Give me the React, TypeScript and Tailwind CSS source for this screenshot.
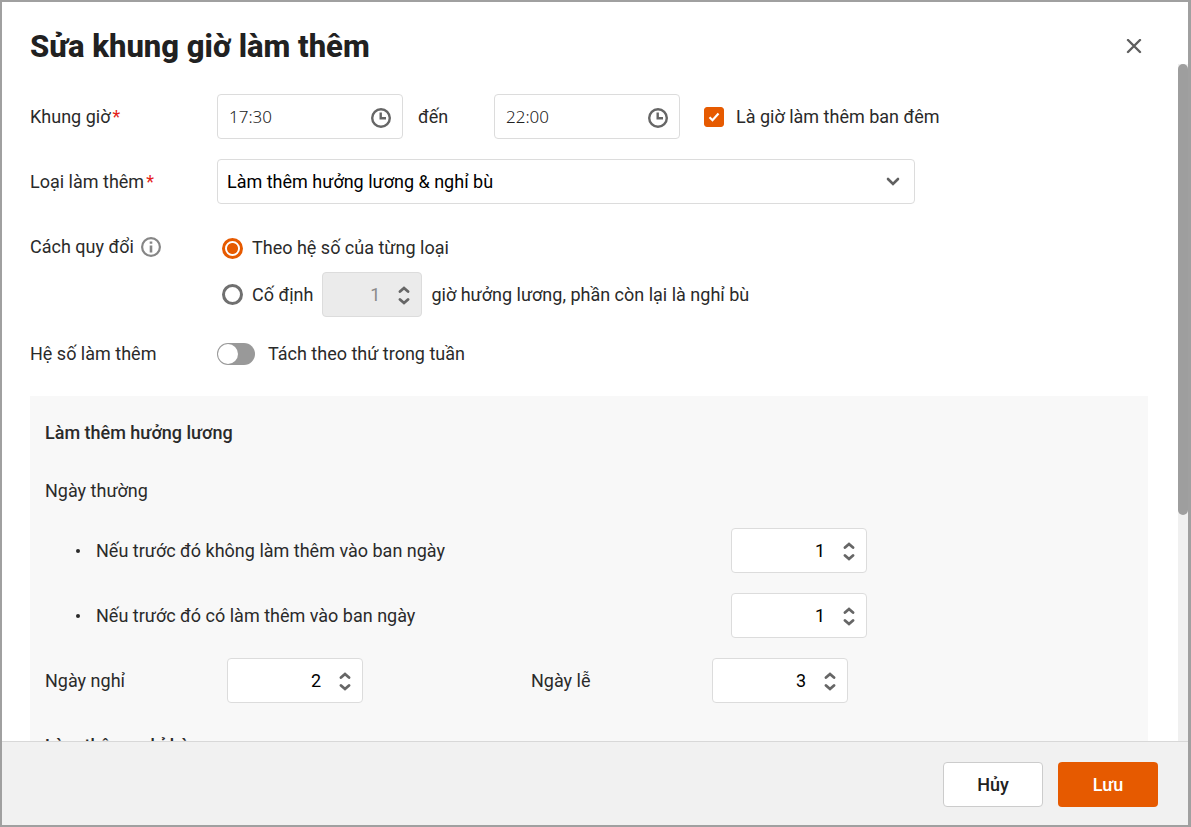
import React, { useState } from 'react';

interface NumberFieldProps {
  label: string;
  initial: number;
  disabled?: boolean;
  className?: string;
}

const Chevron: React.FC<{ up?: boolean }> = ({ up }) => (
  <svg width="12" height="7" viewBox="0 0 12 7" fill="none" stroke="#666" strokeWidth="2.8" strokeLinecap="round">
    <path d={up ? 'M2 5.5L6 2L10 5.5' : 'M2 1.5L6 5L10 1.5'} />
  </svg>
);

const NumberField: React.FC<NumberFieldProps> = ({ label, initial, disabled, className = 'w-[136px]' }) => {
  const [value, setValue] = useState(initial);

  return (
    <div
      className={`flex h-[45px] shrink-0 items-center rounded border border-[#dcdcdc] pr-[11px] ${
        disabled ? 'bg-[#ebebeb] text-[#8a8a8a]' : 'bg-white text-black'
      } ${className}`}
    >
      <input
        type="text"
        inputMode="numeric"
        aria-label={label}
        disabled={disabled}
        value={value}
        onChange={(e) => setValue(Number(e.target.value) || 0)}
        className="h-full w-full min-w-0 bg-transparent text-right outline-none"
      />
      <div className="ml-[18px] mt-[2px] flex flex-col gap-[5px]">
        <button type="button" aria-label="Tăng" disabled={disabled} onClick={() => setValue(value + 1)}>
          <Chevron up />
        </button>
        <button type="button" aria-label="Giảm" disabled={disabled} onClick={() => setValue(value - 1)}>
          <Chevron />
        </button>
      </div>
    </div>
  );
};

const TimeField: React.FC<{ id: string; label: string; initial: string }> = ({ id, label, initial }) => (
  <div className="flex h-[45px] w-[186px] shrink-0 items-center rounded border border-[#dcdcdc] px-[11px]">
    <input
      id={id}
      type="text"
      aria-label={label}
      defaultValue={initial}
      className="h-full w-full min-w-0 bg-transparent font-['Noto_Sans',sans-serif] text-[17px] font-light text-[#222] outline-none"
    />
    <svg className="mt-[2px] shrink-0" width="20" height="20" viewBox="0 0 20 20" fill="none" stroke="#666" strokeWidth="2.4">
      <circle cx="10" cy="10" r="8.8" />
      <path d="M9.7 4.5V10.2H15" />
    </svg>
  </div>
);

const Required = () => <span className="ml-[2px] text-[#e5231b]">*</span>;

const radioClass =
  'size-[21px] shrink-0 appearance-none rounded-full border-[3px] border-[#707070] bg-white checked:border-[#e65a00] checked:bg-[radial-gradient(circle,#e65a00_5px,#fff_6px)]';

const App = () => {
  const [mode, setMode] = useState('rate');
  const [split, setSplit] = useState(false);

  return (
    <div className="flex h-screen flex-col overflow-hidden border-2 border-r-3 border-[#a0a0a0] bg-white font-[Roboto,sans-serif] text-[18px] leading-6 text-[#2a2a2a]">
      <header className="flex h-[62px] shrink-0 items-center justify-between pl-7 pr-[46px] pt-7">
        <h1 className="text-[31px] font-extrabold leading-9 text-[#212121]">Sửa khung giờ làm thêm</h1>
        <button type="button" aria-label="Đóng">
          <svg width="16" height="16" viewBox="0 0 16 16" stroke="#5f5f5f" strokeWidth="2.4" strokeLinecap="round">
            <path d="M2 1L14 13M14 1L2 13" />
          </svg>
        </button>
      </header>

      <div className="flex min-h-0 flex-1">
        <form className="min-w-0 flex-1 overflow-y-auto pl-7 pr-[30px] pt-[30px] [scrollbar-width:none]">
          <div className="mb-5 flex h-[45px] items-center">
            <label htmlFor="from" className="w-[187px] shrink-0">
              Khung giờ
              <Required />
            </label>
            <TimeField id="from" label="Từ" initial="17:30" />
            <label htmlFor="to" className="w-[91px] shrink-0 pl-[15px]">
              đến
            </label>
            <TimeField id="to" label="Đến" initial="22:00" />
            <label className="ml-6 flex items-center gap-3">
              <span className="relative flex">
                <input
                  type="checkbox"
                  defaultChecked
                  className="peer size-5 appearance-none rounded-[3px] border border-[#999] checked:border-[#e65a00] checked:bg-[#e65a00]"
                />
                <svg
                  className="pointer-events-none absolute left-1 top-1 hidden peer-checked:block"
                  width="12"
                  height="12"
                  viewBox="0 0 12 12"
                  fill="none"
                  stroke="#fff"
                  strokeWidth="2.2"
                >
                  <path d="M1.5 6.2L4.5 9.2L10.5 2.5" />
                </svg>
              </span>
              Là giờ làm thêm ban đêm
            </label>
          </div>

          <div className="mb-5 flex h-[45px] items-center">
            <label htmlFor="kind" className="w-[187px] shrink-0">
              Loại làm thêm
              <Required />
            </label>
            <div className="relative w-[698px]">
              <select
                id="kind"
                className="h-[45px] w-full appearance-none rounded border border-[#dcdcdc] bg-white px-[9px] text-black outline-none"
              >
                <option>Làm thêm hưởng lương &amp; nghỉ bù</option>
              </select>
              <svg
                className="pointer-events-none absolute right-[15px] top-[18px]"
                width="14"
                height="10"
                viewBox="0 0 14 10"
                fill="none"
                stroke="#606060"
                strokeWidth="2.6"
                strokeLinecap="round"
              >
                <path d="M2 2L7 7L12 2" />
              </svg>
            </div>
          </div>

          <div className="mb-[14px] flex items-start">
            <div className="flex h-[45px] w-[187px] shrink-0 items-center gap-[7px]">
              Cách quy đổi
              <svg width="20" height="20" viewBox="0 0 20 20" fill="none" stroke="#868686" strokeWidth="2.2">
                <circle cx="10" cy="10" r="8.9" />
                <path d="M10 8.5V15.5M10 4.5V6.7" strokeWidth="2.6" />
              </svg>
            </div>
            <div className="pl-[5px]">
              <label className="flex h-12 items-center gap-[9px]">
                <input
                  type="radio"
                  name="mode"
                  checked={mode === 'rate'}
                  onChange={() => setMode('rate')}
                  className={radioClass}
                />
                Theo hệ số của từng loại
              </label>
              <div className="flex items-center gap-[9px]">
                <label className="flex items-center gap-[9px]">
                  <input
                    type="radio"
                    name="mode"
                    checked={mode === 'fixed'}
                    onChange={() => setMode('fixed')}
                    className={radioClass}
                  />
                  Cố định
                </label>
                <NumberField label="Số giờ hưởng lương" initial={1} disabled={mode !== 'fixed'} className="w-[100px]" />
                <span>giờ hưởng lương, phần còn lại là nghỉ bù</span>
              </div>
            </div>
          </div>

          <div className="mb-5 flex h-[45px] items-center">
            <span className="w-[187px] shrink-0">Hệ số làm thêm</span>
            <label className="flex items-center gap-[13px]">
              <input
                type="checkbox"
                role="switch"
                checked={split}
                onChange={(e) => setSplit(e.target.checked)}
                className="flex h-[22px] w-[38px] appearance-none items-center rounded-full bg-[#999] px-px before:size-5 before:rounded-full before:bg-white checked:justify-end checked:bg-[#e65a00]"
              />
              Tách theo thứ trong tuần
            </label>
          </div>

          <section className="bg-[#f8f8f8] px-[15px] pt-[14px]">
            <h2 className="mb-[13px] flex h-[45px] items-center font-medium">Làm thêm hưởng lương</h2>
            <p className="mb-[15px] flex h-[45px] items-center">Ngày thường</p>
            <ul>
              {['Nếu trước đó không làm thêm vào ban ngày', 'Nếu trước đó có làm thêm vào ban ngày'].map((text) => (
                <li key={text} className="mb-5 flex items-center pl-[31px]">
                  <span className="mr-4 size-1 rounded-full bg-[#2a2a2a]" />
                  <span className="w-[635px]">{text}</span>
                  <NumberField label={text} initial={1} />
                </li>
              ))}
            </ul>
            <div className="mb-5 flex items-center">
              <div className="flex w-[486px] items-center">
                <span className="w-[182px]">Ngày nghỉ</span>
                <NumberField label="Ngày nghỉ" initial={2} />
              </div>
              <div className="flex items-center">
                <span className="w-[181px]">Ngày lễ</span>
                <NumberField label="Ngày lễ" initial={3} />
              </div>
            </div>
            <h2 className="flex h-[45px] items-center font-medium">Làm thêm nghỉ bù</h2>
          </section>
        </form>

        <div className="w-[10px] shrink-0 bg-[#f0f0f0]">
          <div className="h-2/3 rounded-full bg-[#9e9e9e]" />
        </div>
      </div>

      <footer className="flex shrink-0 justify-end gap-[15px] border-t border-[#d8d8d8] bg-[#f1f1f1] pb-[18px] pr-[30px] pt-5">
        <button type="button" className="h-[45px] w-[100px] rounded border border-[#ccc] bg-white font-medium text-[#212121]">
          Hủy
        </button>
        <button type="button" className="h-[45px] w-[100px] rounded bg-[#e65a00] font-medium text-white">
          Lưu
        </button>
      </footer>
    </div>
  );
};

export default App;
